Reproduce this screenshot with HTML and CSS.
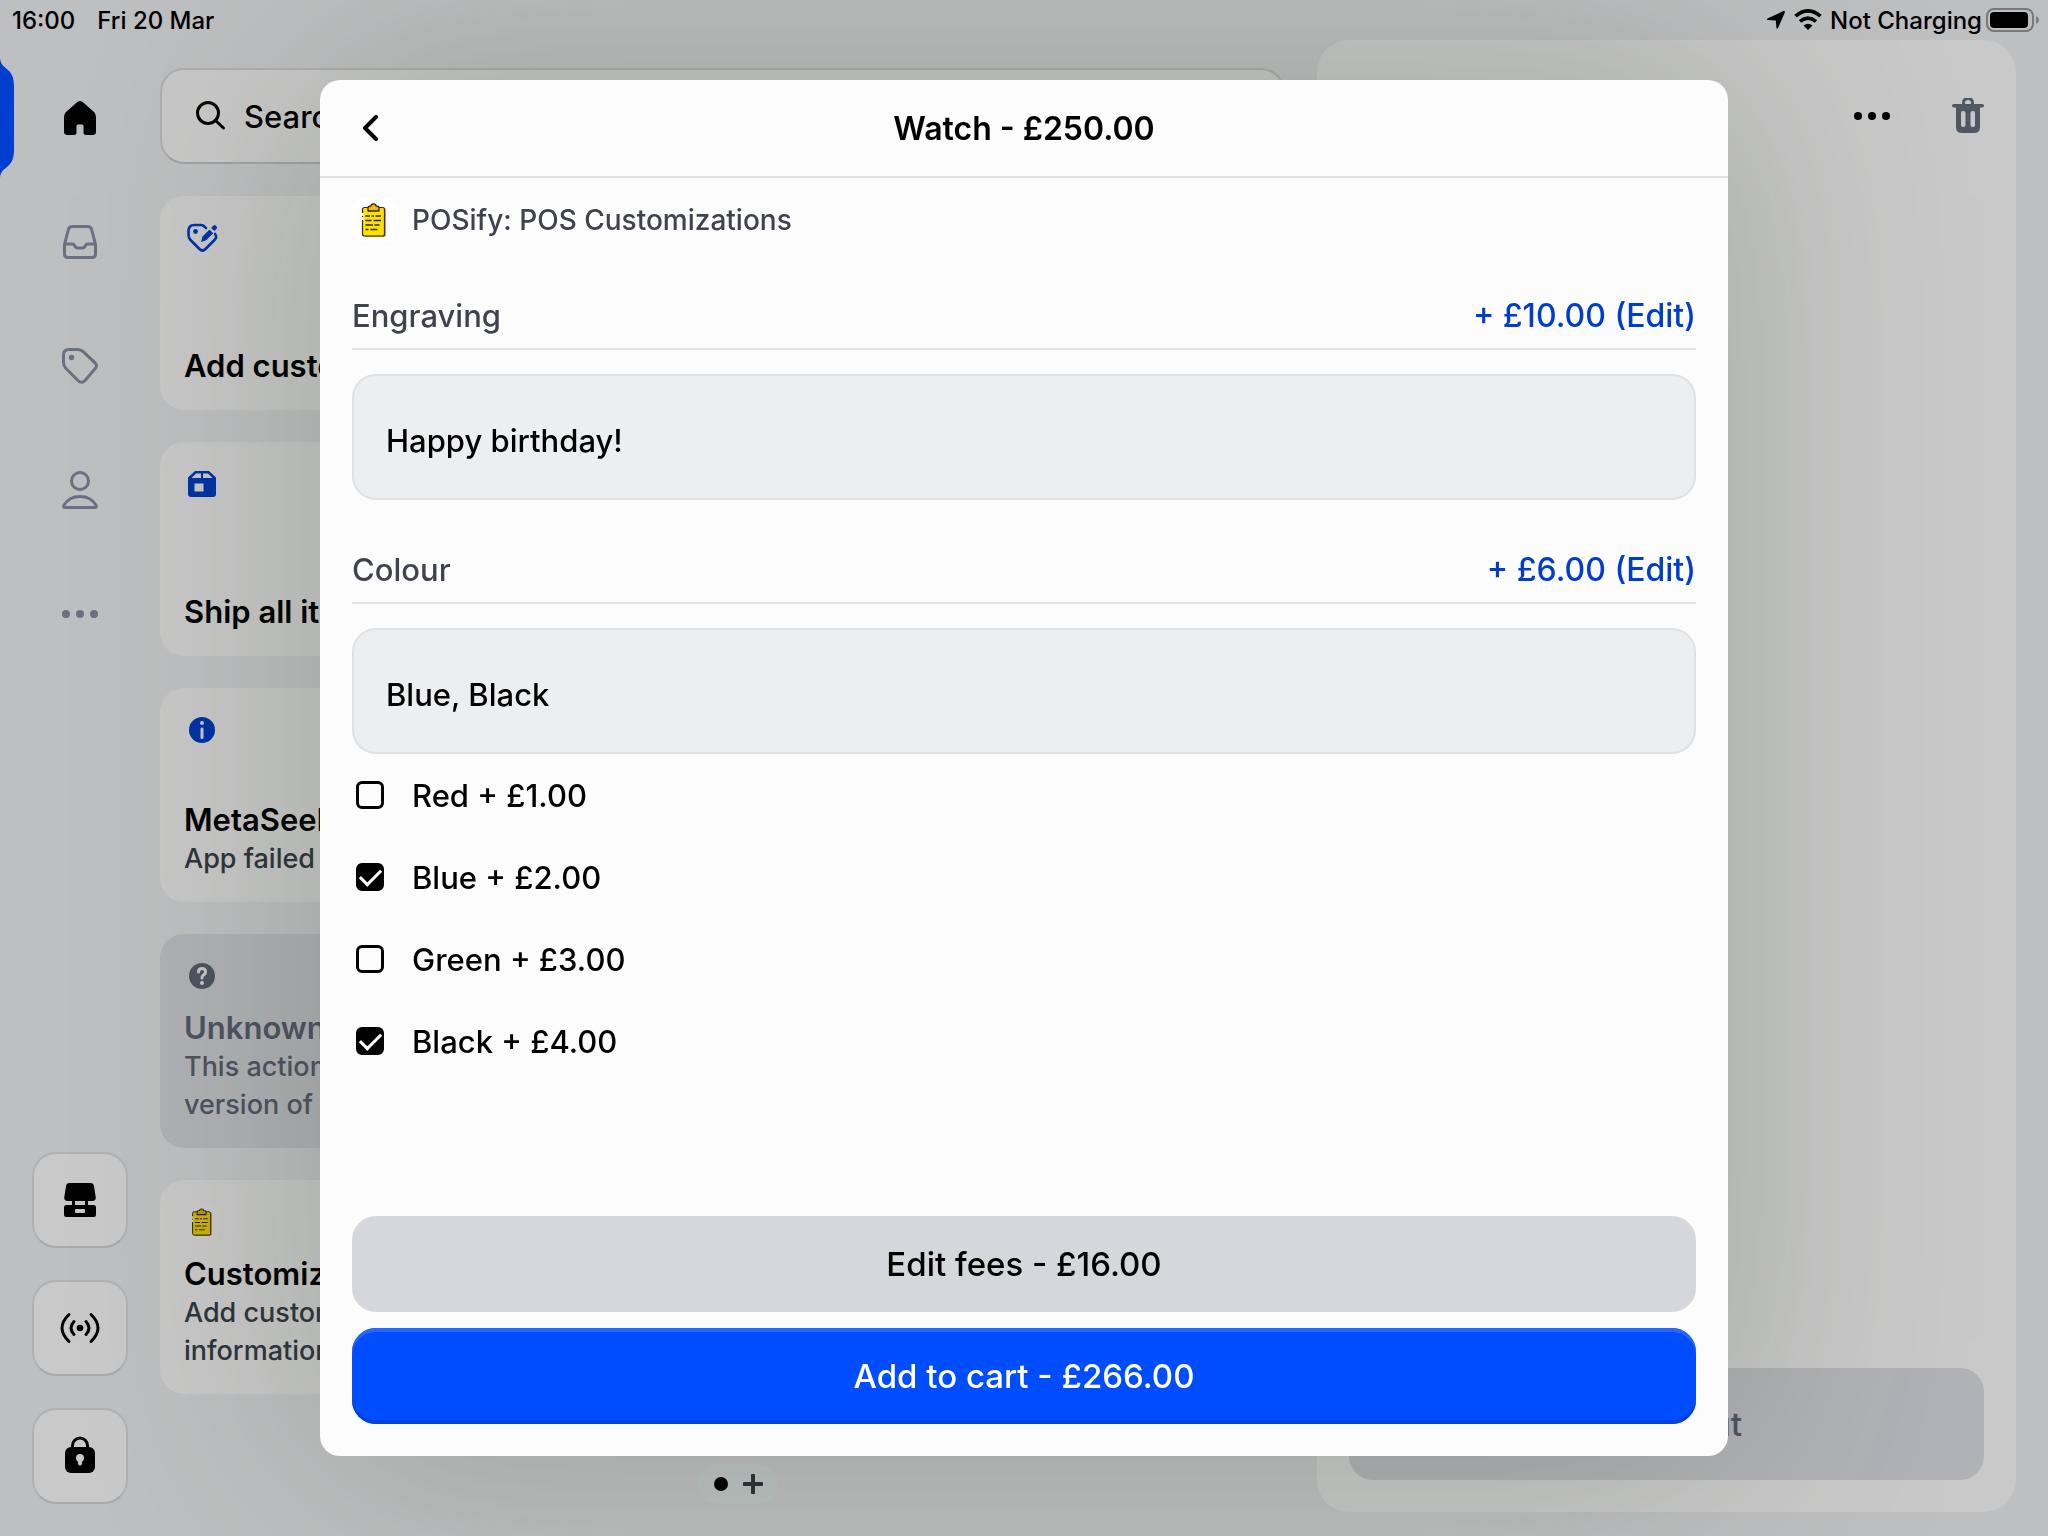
FILE: index.html
```html
<!DOCTYPE html>
<html lang="en-GB">
<head>
<meta charset="utf-8">
<meta name="viewport" content="width=device-width, initial-scale=1">
<title>Watch - £250.00</title>
<link rel="stylesheet" href="styles.css">
</head>
<body>
<svg class="defs" aria-hidden="true">
  <symbol id="clipboard" viewBox="0 0 44 44">
    <rect class="clip-tile" width="44" height="44" rx="10"/>
    <path d="M13 10h19q2 0 2 2v25q0 2-2 2H13z" fill="#f5a800"/>
    <rect x="10.500" y="9.500" width="22" height="28.500" rx="2" fill="#ffe100" stroke="#2b2b2b" stroke-width="1.200"/>
    <path d="M10.500 15v7" stroke="#fff" stroke-width="2" stroke-dasharray="3 1"/>
    <path d="M16 13v-3q0-2 3-2 0-2 2.500-2t2.500 2q3 0 3 2v3z" fill="#fbb900" stroke="#2b2b2b" stroke-width="1.300" stroke-linejoin="round"/>
    <path d="M13.500 18h4.500m1.500 0h2.500m1.500 0h5.500M13.500 22.500h6m2 0h7.500M13.500 27h7.500m1.500 0h5M13.500 31.500h3m2 0h7" stroke="#2b2b2b" stroke-width="1.300"/>
  </symbol>
</svg>

<div class="app">
  <header class="status">
    <div class="status-group">
      <span>16:00</span>
      <span>Fri 20 Mar</span>
    </div>
    <div class="status-group status-right">
      <svg width="20" height="20" viewBox="0 0 20 20"><path d="M1.500 8.400 17.500 1.100q1.900-.5 1.300 1.300L12 18q-1.200 1.600-1.600-.5L9.800 10.600 2 10.100q-2-.5-.5-1.700z"/></svg>
      <svg width="28" height="22" viewBox="0 0 28 22"><path d="M1.500 7.200Q14-3.500 26.500 7.200M6 12.300q8-6.500 16 0" fill="none" stroke="#000" stroke-width="3.600"/><path d="M9.500 16.500q4.500-3.500 9 0L14 21z"/></svg>
      <span>Not Charging</span>
      <svg width="54" height="24" viewBox="0 0 54 24"><rect x="1" y="1" width="46" height="22" rx="7" fill="none" stroke="#77797a" stroke-width="2"/><rect x="4" y="4" width="38" height="16" rx="4"/><path d="M50 8q3 1.500 3 4t-3 4z" fill="#77797a"/></svg>
    </div>
  </header>

  <aside class="sidebar">
    <nav class="nav">
      <a class="nav-item active" href="#home" aria-label="Home">
        <svg class="tab" width="14" height="120" viewBox="0 0 14 120"><path d="M0 0C1 13 14 8 14 28V92C14 112 1 107 0 120z"/></svg>
        <svg width="40" height="40" viewBox="0 0 40 40"><path d="M17.300 4q2.700-2 5.400 0L34 14q2 2 2 5v14.500q0 3.500-3.500 3.500H26q-2.500 0-2.500-2.500V28q0-1.500-1.500-1.500h-4q-1.500 0-1.500 1.500v6.500Q16.500 37 14 37H7.500Q4 37 4 33.500V19q0-3 2-5z"/></svg>
      </a>
      <a class="nav-item" href="#orders" aria-label="Orders">
        <svg class="line" width="40" height="40" viewBox="0 0 40 40"><path d="M12.500 4.500h15q3.500 0 4.300 3.500l3.700 14.500V32q0 3.500-3.500 3.500H8q-3.500 0-3.500-3.500v-9.500L8.200 8q.8-3.500 4.300-3.500zM4.500 22H12q2 0 2.800 2t2.700 2h5q1.900 0 2.700-2t2.800-2h7.500"/></svg>
      </a>
      <a class="nav-item" href="#products" aria-label="Products">
        <svg class="line" width="40" height="40" viewBox="0 0 40 40"><path d="M9 3.500h9q3 0 5.500 2.300l11.500 11q3 3 0 6L25 34.500q-3.500 3.500-7 0L6 22.500q-2.500-2.500-2.500-5.500V9q0-5.500 5.500-5.500z"/><circle class="solid" cx="11.500" cy="11.500" r="2.700"/></svg>
      </a>
      <a class="nav-item" href="#customers" aria-label="Customers">
        <svg class="line" width="40" height="40" viewBox="0 0 40 40"><circle cx="20" cy="11" r="8.500"/><path d="M5 37.500q-2 0-1.300-2Q9 26.500 20 26.500t16.300 9q.7 2-1.300 2z"/></svg>
      </a>
      <a class="nav-item" href="#more" aria-label="More">
        <svg width="40" height="40" viewBox="0 0 40 40"><circle cx="6" cy="20" r="4"/><circle cx="20" cy="20" r="4"/><circle cx="34" cy="20" r="4"/></svg>
      </a>
    </nav>
    <div class="tools">
      <button class="tool" aria-label="Register">
        <svg width="40" height="40" viewBox="0 0 40 40"><path d="M9.500 3h21q3 0 3.500 3l1.700 11q.6 4-3.700 4H28v4h5.500q2.500 0 2.500 2.500v7q0 2.500-2.500 2.500h-27Q4 37 4 34.500v-7Q4 25 6.500 25H12v-4H8q-4.300 0-3.700-4L6 6q.5-3 3.500-3zM15 21v4h10v-4z"/><rect class="gap" x="15" y="29" width="10" height="4" rx="1"/></svg>
      </button>
      <button class="tool" aria-label="Card reader">
        <svg width="40" height="40" viewBox="0 0 40 40"><circle cx="20" cy="20" r="3.300"/><path d="M14 13.500q-6 6.500 0 13M26 13.500q6 6.500 0 13M9 6.500q-14 13.500 0 27M31 6.500q14 13.500 0 27" fill="none" stroke="#000" stroke-width="3" stroke-linecap="round"/></svg>
      </button>
      <button class="tool" aria-label="Lock">
        <svg width="40" height="40" viewBox="0 0 40 40"><path d="M12.500 13V9.500a7.500 7.500 0 0 1 15 0V13" fill="none" stroke="#000" stroke-width="3"/><rect x="5" y="11" width="30" height="26" rx="6"/><circle class="gap" cx="20" cy="22" r="4"/><path class="gap" d="M18 23h4v5q-2 3.500-4 0z"/></svg>
      </button>
    </div>
  </aside>

  <main class="main">
    <button class="search">
      <svg width="32" height="32" viewBox="0 0 32 32"><circle cx="14" cy="13" r="10.500"/><path d="m21.500 20.500 8 7.500"/></svg>
      <span>Search</span>
    </button>
    <div class="cards">
      <button class="card">
        <svg class="card-icon blue" viewBox="0 0 36 36"><path d="M22 8q-2.500-3-5-3h-6.500Q4.500 5 4.500 11v4q0 3 2 5l9 9q3 3 6 0l9-9q3-3 .5-6" fill="none" stroke="currentColor" stroke-width="2.600" stroke-linecap="round"/><circle cx="11.500" cy="11.500" r="2.400"/><path d="m17 22 1.500-5.500 7-7 3.700 3.700-7 7z M27 8l2.500-2.500q1.200-1 2.700.5t.5 2.700L30.500 11z"/></svg>
        <strong>Add custom sale</strong>
      </button>
      <button class="card">
        <svg class="card-icon blue" viewBox="0 0 36 36"><path fill-rule="evenodd" d="M11 5h14l7 6.500V28q0 3-3 3H7q-3 0-3-3V11.500zM12 7.500 7.500 12H17V7.500zm7 0V12h9.500L24 7.500zM10.500 17.500v8h9v-8z"/></svg>
        <strong>Ship all items</strong>
      </button>
      <button class="card">
        <svg class="card-icon blue" viewBox="0 0 36 36"><circle cx="18" cy="18" r="13"/><circle class="gap" cx="18" cy="11" r="2"/><path class="cut" d="M18 17v8.500"/></svg>
        <strong>MetaSeek</strong>
        <span>App failed to load</span>
      </button>
      <button class="card muted">
        <svg class="card-icon" viewBox="0 0 36 36"><circle cx="18" cy="18" r="13"/><path class="cut" d="M14.500 14q0-3.500 3.500-3.500t3.500 3.200Q21.500 16 19.500 17 18 17.800 18 20"/><circle class="gap" cx="18" cy="25" r="2"/></svg>
        <strong>Unknown action</strong>
        <span>This action requires a newer<br>version of POS</span>
      </button>
      <button class="card">
        <svg class="card-icon dim"><use href="#clipboard"/></svg>
        <strong>Customizations</strong>
        <span>Add customizations and<br>information to items</span>
      </button>
    </div>
    <div class="pager">
      <i class="dot"></i>
      <svg width="20" height="20" viewBox="0 0 20 20"><path d="M10 1.500v17M1.500 10h17"/></svg>
    </div>
  </main>

  <section class="cart">
    <div class="cart-actions">
      <button class="icon-button" aria-label="Cart options">
        <svg width="36" height="36" viewBox="0 0 36 36"><circle cx="4" cy="18" r="4"/><circle cx="18" cy="18" r="4"/><circle cx="32" cy="18" r="4"/></svg>
      </button>
      <button class="icon-button" aria-label="Clear cart">
        <svg width="32" height="36" viewBox="0 0 32 36" fill="#525863"><path d="M11.500 7V5q0-4.500 4.500-4.500T20.500 5v2" fill="none" stroke="#525863" stroke-width="3"/><rect y="6" width="32" height="3.500" rx="1.700"/><path d="M4 8h24v21q0 6-6 6H10q-6 0-6-6z"/><rect class="gap" x="9" y="13" width="4.500" height="16" rx="2"/><rect class="gap" x="18.500" y="13" width="4.500" height="16" rx="2"/></svg>
      </button>
    </div>
    <button class="checkout">Checkout</button>
  </section>
</div>

<div class="overlay">
  <div class="modal" role="dialog" aria-modal="true" aria-labelledby="modal-title">
    <header class="modal-header">
      <button class="back" aria-label="Back">
        <svg width="16" height="26" viewBox="0 0 16 26"><path d="M14 2 3 13l11 11"/></svg>
      </button>
      <h1 id="modal-title">Watch - £250.00</h1>
    </header>
    <div class="modal-body">
      <div class="app-name">
        <svg width="44" height="44"><use href="#clipboard"/></svg>
        <span>POSify: POS Customizations</span>
      </div>
      <section class="field">
        <div class="field-head">
          <label for="engraving">Engraving</label>
          <a href="#engraving">+ £10.00 (Edit)</a>
        </div>
        <input class="text" id="engraving" type="text" value="Happy birthday!">
      </section>
      <section class="field">
        <div class="field-head">
          <label for="colour">Colour</label>
          <a href="#colour">+ £6.00 (Edit)</a>
        </div>
        <input class="text" id="colour" type="text" value="Blue, Black">
        <div class="options">
          <label><input type="checkbox">Red + £1.00</label>
          <label><input type="checkbox" checked>Blue + £2.00</label>
          <label><input type="checkbox">Green + £3.00</label>
          <label><input type="checkbox" checked>Black + £4.00</label>
        </div>
      </section>
    </div>
    <footer class="modal-footer">
      <button class="action secondary">Edit fees - £16.00</button>
      <button class="action primary">Add to cart - £266.00</button>
    </footer>
  </div>
</div>
</body>
</html>
```

FILE: styles.css
```css
* {
  box-sizing: border-box;
}

body {
  margin: 0;
  background: #bebfc1;
  color: #000;
  font-family: Inter, "Liberation Sans", sans-serif;
  font-size: 31px;
  font-weight: 500;
}

button,
input {
  font: inherit;
  color: inherit;
  margin: 0;
}

button {
  border: 0;
  padding: 0;
  background: none;
}

a {
  color: inherit;
  text-decoration: none;
}

svg {
  display: block;
  flex: none;
}

.defs {
  position: absolute;
  width: 0;
  height: 0;
}

.clip-tile {
  fill: #fff;
}

.gap {
  fill: #c6c7c6;
}

.cut {
  fill: none;
  stroke: #c6c7c6;
  stroke-width: 3;
  stroke-linecap: round;
}

/* Register screen behind the dialog */
.app {
  display: grid;
  grid-template-columns: 160px minmax(0, 48fr) minmax(0, 29fr);
  grid-template-rows: 40px 1fr;
  min-height: 100vh;
  padding-right: 32px;
}

.status {
  grid-column: 1 / -1;
  display: flex;
  justify-content: space-between;
  align-items: center;
  margin-right: -24px;
  padding-left: 12px;
  font-size: 24px;
}

.status-group {
  display: flex;
  align-items: center;
  gap: 22px;
}

.status-right {
  gap: 8px;
}

.status-right span {
  margin-right: -4px;
}

.sidebar {
  display: flex;
  flex-direction: column;
  justify-content: space-between;
  padding: 16px 0 32px;
}

.nav-item {
  position: relative;
  display: flex;
  align-items: center;
  justify-content: center;
  height: 124px;
  fill: #6b7180;
}

.nav-item.active {
  fill: #000;
}

.tab {
  position: absolute;
  left: 0;
  top: 2px;
  fill: #003ed0;
}

.line {
  fill: none;
  stroke: #6b7180;
  stroke-width: 3;
  stroke-linejoin: round;
}

.solid {
  fill: #6b7180;
  stroke: none;
}

.tools {
  display: flex;
  flex-direction: column;
  align-items: center;
  gap: 32px;
}

.tool {
  display: flex;
  align-items: center;
  justify-content: center;
  width: 96px;
  height: 96px;
  border: 2px solid #b1b2b3;
  border-bottom-color: #a9aaab;
  border-radius: 24px;
  background: #c9c9c9;
}

.main {
  display: flex;
  flex-direction: column;
  padding: 28px 0 32px;
}

.search {
  display: flex;
  align-items: center;
  gap: 18px;
  height: 96px;
  margin-right: 32px;
  padding: 0 32px;
  border: 2px solid #adaeae;
  border-bottom-color: #a2a3a3;
  border-radius: 24px;
  background: #c8c8c8;
}

.search svg {
  fill: none;
  stroke: #000;
  stroke-width: 3;
  stroke-linecap: round;
}

.cards {
  display: grid;
  grid-template-columns: repeat(2, minmax(0, 1fr));
  grid-auto-rows: 214px;
  gap: 32px;
  margin: 32px 32px 0 0;
}

.card {
  grid-column: 1;
  display: flex;
  flex-direction: column;
  padding: 24px;
  border-radius: 24px;
  background: #c8c8c8;
  text-align: left;
  line-height: 40px;
}

.card strong {
  margin-top: auto;
  font-weight: 600;
}

.card span {
  color: #2f333c;
  font-size: 27px;
  line-height: 38px;
}

.card-icon {
  width: 36px;
  height: 36px;
}

.blue {
  color: #0032a6;
  fill: #0032a6;
}

.dim {
  filter: brightness(0.79);
}

.muted {
  background: #b0b1b5;
  color: #4d5260;
  fill: #4d5260;
}

.muted span {
  color: #4d5260;
}

.pager {
  align-self: center;
  display: flex;
  align-items: center;
  justify-content: center;
  gap: 15px;
  width: 80px;
  height: 40px;
  margin-top: auto;
  border-radius: 20px;
  background: #bec3c4;
}

.dot {
  width: 14px;
  height: 14px;
  border-radius: 50%;
  background: #000;
}

.pager svg {
  fill: none;
  stroke: #2b2f35;
  stroke-width: 4;
  stroke-linecap: round;
}

.cart {
  display: flex;
  flex-direction: column;
  justify-content: space-between;
  margin-bottom: 24px;
  padding: 32px;
  border-radius: 32px;
  background: #c9c9c9;
}

.cart-actions {
  display: flex;
  justify-content: flex-end;
  gap: 62px;
}

.icon-button {
  height: 88px;
}

.checkout {
  height: 112px;
  border-radius: 24px;
  background: #b1b2b7;
  color: #4d5260;
  font-size: 33px;
}

/* Dialog */
.overlay {
  position: fixed;
  inset: 0;
  display: flex;
  justify-content: center;
  padding: 80px;
}

.modal {
  display: flex;
  flex-direction: column;
  width: 100%;
  max-width: 1408px;
  border-radius: 20px;
  background: #fcfcfc;
  box-shadow: 0 0 240px rgba(45, 65, 40, 0.26);
}

.modal-header {
  display: grid;
  grid-template-columns: 1fr auto 1fr;
  align-items: center;
  height: 98px;
  padding: 0 32px;
  border-bottom: 2px solid #e0e1e6;
}

.modal-header h1 {
  margin: 0;
  font-size: 32px;
  font-weight: 600;
}

.back {
  justify-self: start;
  padding: 8px 10px;
}

.back svg {
  fill: none;
  stroke: #000;
  stroke-width: 4;
  stroke-linecap: round;
  stroke-linejoin: round;
}

.modal-body {
  flex: 1;
  padding: 20px 32px 0;
}

.app-name {
  display: flex;
  align-items: center;
  gap: 16px;
  margin-bottom: 42px;
  color: #40434e;
  font-size: 28px;
}

.field + .field {
  margin-top: 38px;
}

.field-head {
  display: flex;
  justify-content: space-between;
  align-items: center;
  height: 66px;
  padding-bottom: 2px;
  border-bottom: 2px solid #e0e1e6;
  color: #40434e;
}

.field-head a {
  color: #003dcc;
  font-size: 32px;
}

.text {
  display: block;
  width: 100%;
  height: 126px;
  margin-top: 24px;
  padding: 6px 32px 0;
  border: 2px solid #e0e1e5;
  border-radius: 24px;
  background: #edeef0;
}

.options label {
  display: flex;
  align-items: center;
  gap: 28px;
  height: 82px;
  padding-left: 4px;
}

.options input {
  appearance: none;
  display: grid;
  place-items: center;
  width: 28px;
  height: 28px;
  border: 3px solid #000;
  border-radius: 6px;
}

.options input:checked {
  background: #000;
}

.options input:checked::before {
  content: "";
  width: 18px;
  height: 9px;
  margin-top: -5px;
  border: solid #fff;
  border-width: 0 0 3px 3px;
  transform: rotate(-45deg);
}

.modal-footer {
  display: grid;
  gap: 16px;
  padding: 0 32px 32px;
}

.action {
  height: 96px;
  border-radius: 24px;
  font-size: 33px;
}

.secondary {
  background: #d6d7dc;
}

.primary {
  background: #004dff;
  color: #fff;
  box-shadow: inset 0 -4px #0042db, inset 0 4px #2466ff;
}
```
